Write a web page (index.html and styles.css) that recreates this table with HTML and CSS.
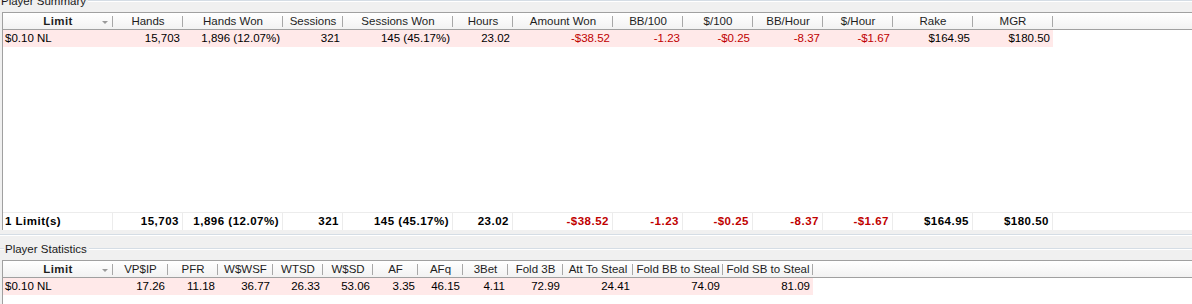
FILE: index.html
```html
<!DOCTYPE html>
<html>
<head>
<meta charset="utf-8">
<link rel="stylesheet" href="styles.css">
</head>
<body>
<div class="page">
  <div class="gtitle first"><span class="gline short"></span><span class="glabel">Player Summary</span><span class="gline"></span></div>
  <div class="grid summary">
    <div class="hdr">
      <div class="hc w110 sortcol"><span class="bold">Limit</span><span class="arrow"></span></div>
      <div class="hc w70">Hands</div>
      <div class="hc w100">Hands Won</div>
      <div class="hc w60">Sessions</div>
      <div class="hc w110">Sessions Won</div>
      <div class="hc w60">Hours</div>
      <div class="hc w100">Amount Won</div>
      <div class="hc w70">BB/100</div>
      <div class="hc w70">$/100</div>
      <div class="hc w70">BB/Hour</div>
      <div class="hc w70">$/Hour</div>
      <div class="hc w80">Rake</div>
      <div class="hc w80">MGR</div>
      <div class="hc rest"></div>
    </div>
    <div class="row pink">
      <div class="c w110 left">$0.10 NL</div>
      <div class="c w70">15,703</div>
      <div class="c w100">1,896 (12.07%)</div>
      <div class="c w60">321</div>
      <div class="c w110">145 (45.17%)</div>
      <div class="c w60">23.02</div>
      <div class="c w100 neg">-$38.52</div>
      <div class="c w70 neg">-1.23</div>
      <div class="c w70 neg">-$0.25</div>
      <div class="c w70 neg">-8.37</div>
      <div class="c w70 neg">-$1.67</div>
      <div class="c w80">$164.95</div>
      <div class="c w80">$180.50</div>
    </div>
    <div class="filler"></div>
    <div class="row total">
      <div class="c w110 left">1 Limit(s)</div>
      <div class="c w70">15,703</div>
      <div class="c w100">1,896 (12.07%)</div>
      <div class="c w60">321</div>
      <div class="c w110">145 (45.17%)</div>
      <div class="c w60">23.02</div>
      <div class="c w100 neg">-$38.52</div>
      <div class="c w70 neg">-1.23</div>
      <div class="c w70 neg">-$0.25</div>
      <div class="c w70 neg">-8.37</div>
      <div class="c w70 neg">-$1.67</div>
      <div class="c w80">$164.95</div>
      <div class="c w80">$180.50</div>
    </div>
  </div>
  <div class="gbottom"></div>
  <div class="gtitle"><span class="gline short"></span><span class="glabel">Player Statistics</span><span class="gline"></span></div>
  <div class="grid stats">
    <div class="hdr">
      <div class="hc w110 sortcol"><span class="bold">Limit</span><span class="arrow"></span></div>
      <div class="hc w55">VP$IP</div>
      <div class="hc w50">PFR</div>
      <div class="hc w55">W$WSF</div>
      <div class="hc w50">WTSD</div>
      <div class="hc w50">W$SD</div>
      <div class="hc w45">AF</div>
      <div class="hc w45">AFq</div>
      <div class="hc w45">3Bet</div>
      <div class="hc w55">Fold 3B</div>
      <div class="hc w70">Att To Steal</div>
      <div class="hc w90">Fold BB to Steal</div>
      <div class="hc w90">Fold SB to Steal</div>
      <div class="hc rest"></div>
    </div>
    <div class="row pink">
      <div class="c w110 left">$0.10 NL</div>
      <div class="c w55">17.26</div>
      <div class="c w50">11.18</div>
      <div class="c w55">36.77</div>
      <div class="c w50">26.33</div>
      <div class="c w50">53.06</div>
      <div class="c w45">3.35</div>
      <div class="c w45">46.15</div>
      <div class="c w45">4.11</div>
      <div class="c w55">72.99</div>
      <div class="c w70">24.41</div>
      <div class="c w90">74.09</div>
      <div class="c w90">81.09</div>
    </div>
    <div class="filler2"></div>
  </div>
</div>
</body>
</html>
```

FILE: styles.css
```css
html, body {
  margin: 0;
  padding: 0;
}
body {
  width: 1192px;
  height: 304px;
  overflow: hidden;
  background: #f0f0f0;
  font-family: "Liberation Sans", Arial, sans-serif;
  font-size: 11.5px;
  color: #000;
}
.page {
  display: flex;
  flex-direction: column;
}
.gtitle {
  display: flex;
  align-items: center;
  height: 12px;
  margin-bottom: 5px;
}
.gtitle.first {
  margin-top: -5px;
}
.glabel {
  color: #1a1a1a;
  line-height: 12px;
  padding: 0 2px 0 1px;
  white-space: nowrap;
}
.gline {
  flex: 1;
  height: 0;
  border-top: 1px solid #d5dde5;
  border-bottom: 1px solid #fff;
}
.gline.short {
  flex: 0 0 4px;
}
.gtitle.first .gline.short {
  flex: 0 0 0px;
  border: 0;
}
.gbottom {
  margin-top: 4px;
  margin-bottom: 7px;
  height: 0;
  border-top: 1px solid #d5dde5;
  border-bottom: 1px solid #fff;
}
.grid {
  margin-left: 2px;
  border-left: 1px solid #a0a0a0;
  background: #fff;
  display: flex;
  flex-direction: column;
}
.hdr {
  display: flex;
  height: 16px;
  border-top: 1px solid #a0a0a0;
  border-bottom: 1px solid #a0a0a0;
  background: linear-gradient(#ffffff, #f2f2f2);
}
.hc {
  box-sizing: border-box;
  flex: 0 0 auto;
  line-height: 16px;
  text-align: center;
  color: #1e1e1e;
  white-space: nowrap;
  overflow: hidden;
  background: linear-gradient(#a8a8a8, #a8a8a8) right 3px / 1px 11px no-repeat;
}
.hc.rest {
  flex: 1;
  background: none;
}
.sortcol {
  display: grid;
  grid-template-columns: 1fr;
  align-items: center;
}
.sortcol > * {
  grid-area: 1 / 1;
}
.bold {
  font-weight: bold;
  letter-spacing: 0.4px;
  justify-self: center;
}
.arrow {
  justify-self: end;
  margin-right: 5px;
  width: 0;
  height: 0;
  border-left: 3px solid transparent;
  border-right: 3px solid transparent;
  border-top: 3px solid #9a9a9a;
  margin-top: 2px;
}
.w45 { width: 45px; }
.w50 { width: 50px; }
.w55 { width: 55px; }
.w60 { width: 60px; }
.w70 { width: 70px; }
.w80 { width: 80px; }
.w90 { width: 90px; }
.w100 { width: 100px; }
.w110 { width: 110px; }
.row {
  display: flex;
  height: 17px;
}
.c {
  box-sizing: border-box;
  flex: 0 0 auto;
  line-height: 17px;
  text-align: right;
  padding: 0 3px 0 2px;
  white-space: nowrap;
  overflow: hidden;
}
.c.left {
  text-align: left;
}
.pink .c {
  background: #ffe9e9;
}
.neg {
  color: #c00000;
}
.filler {
  height: 165px;
}
.total {
  border-top: 1px solid #ececec;
  font-weight: bold;
  letter-spacing: 0.5px;
}
.total .c {
  border-right: 1px solid #ececec;
}
.filler2 {
  height: 20px;
}
```
